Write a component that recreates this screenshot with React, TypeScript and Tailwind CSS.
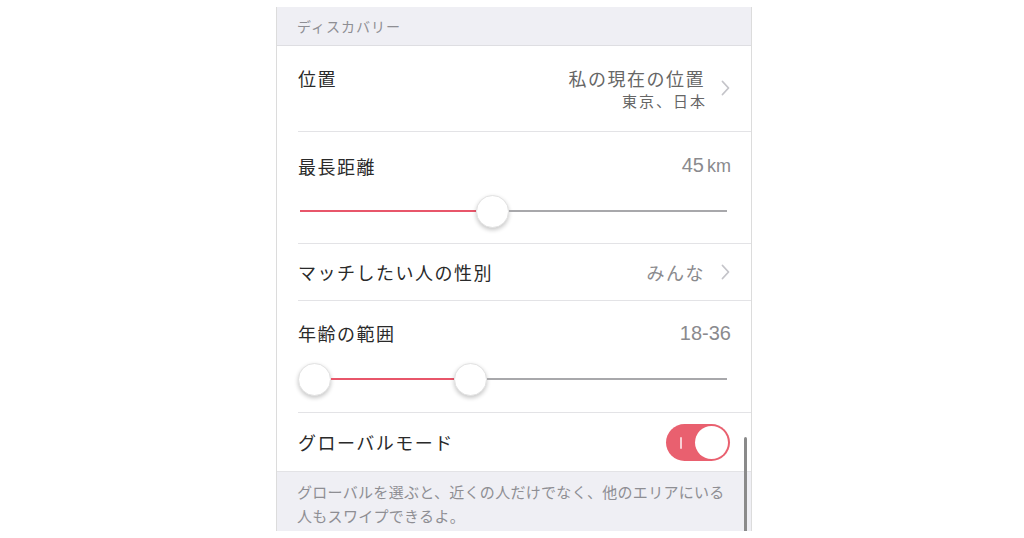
import React from "react";

const font = { fontFamily: '"Noto Sans CJK JP", "Noto Sans", sans-serif' };

function Chevron() {
  return (
    <svg width="9" height="16" viewBox="0 0 9 16" className="ml-[16px] shrink-0">
      <path d="M1.5 1.5 L7.5 8 L1.5 14.5" fill="none" stroke="#c4c4c9" strokeWidth="1.8" strokeLinecap="round" strokeLinejoin="round" />
    </svg>
  );
}

function Thumb() {
  return (
    <div className="w-[33px] h-[33px] rounded-full bg-white border border-[#e2e2e2] shadow-[0_2px_4px_rgba(0,0,0,0.22)] shrink-0" />
  );
}

export default function App() {
  return (
    <div className="w-[1024px] h-[538px] bg-white pt-[7px] overflow-hidden" style={font}>
      <div className="ml-[276px] w-[476px] h-[524px] border-x border-[#dcdcdc] relative overflow-hidden bg-white">
        {/* Header */}
        <div className="h-[39px] bg-[#efeff4] border-b border-[#dedee2] flex items-center pl-[20px] text-[14px] tracking-[1px] text-[#8e8e93]">
          ディスカバリー
        </div>

        {/* 位置 */}
        <div className="pl-[21px]">
          <div className="h-[86px] border-b border-[#e3e3e6] flex items-start pt-[19px] pr-[21px]">
            <div className="text-[18px] leading-[26px] tracking-[1.5px] text-[#2a2a2a]">位置</div>
            <div className="ml-auto flex items-center">
              <div className="flex flex-col items-end">
                <div className="text-[18px] leading-[26px] tracking-[1.5px] text-[#666]">私の現在の位置</div>
                <div className="text-[15px] leading-[20px] tracking-[2px] text-[#666] mr-[-2px]">東京、日本</div>
              </div>
              <Chevron />
            </div>
          </div>
        </div>

        {/* 最長距離 */}
        <div className="pl-[21px]">
          <div className="h-[112px] border-b border-[#e3e3e6] pt-[20px] pr-[20px]">
            <div className="flex items-center">
              <div className="text-[18px] leading-[26px] tracking-[1.5px] text-[#2a2a2a]">最長距離</div>
              <div className="ml-auto text-[20px] leading-[26px] text-[#8a8a8e]" style={{ fontFamily: '"Liberation Sans", Arial, sans-serif' }}>
                45<span className="text-[18px] ml-[3px]">km</span>
              </div>
            </div>
            <div className="mt-[15px] h-[34px] flex items-center pl-[2px] pr-[4px]">
              <div className="h-[2px] bg-[#e8566a] w-[176px]" />
              <Thumb />
              <div className="h-[2px] bg-[#a8a8ab] flex-1" />
            </div>
          </div>
        </div>

        {/* マッチしたい人の性別 */}
        <div className="pl-[21px]">
          <div className="h-[57px] border-b border-[#e3e3e6] flex items-center pr-[21px]">
            <div className="text-[18px] leading-[26px] tracking-[1.5px] text-[#2a2a2a]">マッチしたい人の性別</div>
            <div className="ml-auto flex items-center">
              <div className="text-[18px] leading-[26px] tracking-[1.5px] text-[#8a8a8e]">みんな</div>
              <Chevron />
            </div>
          </div>
        </div>

        {/* 年齢の範囲 */}
        <div className="pl-[21px]">
          <div className="h-[112px] border-b border-[#e3e3e6] pt-[19px] pr-[20px]">
            <div className="flex items-center">
              <div className="text-[18px] leading-[26px] tracking-[1.5px] text-[#2a2a2a]">年齢の範囲</div>
              <div className="ml-auto text-[20px] leading-[26px] text-[#8a8a8e]" style={{ fontFamily: '"Liberation Sans", Arial, sans-serif' }}>18-36</div>
            </div>
            <div className="mt-[16px] h-[34px] flex items-center pr-[4px]">
              <Thumb />
              <div className="h-[2px] bg-[#e8566a] w-[123px]" />
              <Thumb />
              <div className="h-[2px] bg-[#a8a8ab] flex-1" />
            </div>
          </div>
        </div>

        {/* グローバルモード */}
        <div className="pl-[21px] border-b border-[#e3e3e6]">
          <div className="h-[58px] flex items-center pr-[21px]">
            <div className="text-[18px] leading-[26px] tracking-[1.5px] text-[#2a2a2a]">グローバルモード</div>
            <div className="ml-auto w-[64px] h-[37px] rounded-full bg-[#e9606f] flex items-center justify-end pr-[2px] relative">
              <div className="absolute left-[14px] top-[13px] w-[2px] h-[12px] bg-white/70 rounded" />
              <div className="w-[33px] h-[33px] rounded-full bg-white" />
            </div>
          </div>
        </div>

        {/* Footer */}
        <div className="bg-[#efeff4] h-[80px] pt-[8px] pl-[20px] pr-[20px] text-[15px] leading-[24px] tracking-[0.3px] text-[#8e8e93]">
          グローバルを選ぶと、近くの人だけでなく、他のエリアにいる人もスワイプできるよ。
        </div>

        {/* Scrollbar */}
        <div className="absolute left-[467px] top-[430px] w-[3px] h-[110px] rounded-full bg-[#8a8a8a]" />
      </div>
    </div>
  );
}
